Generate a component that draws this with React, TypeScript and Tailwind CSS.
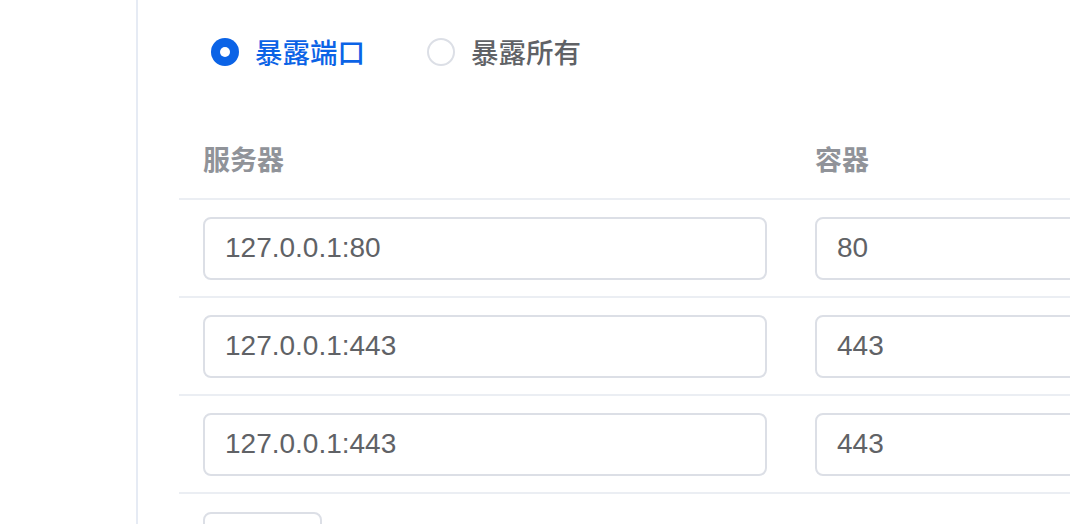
import React, { useState } from 'react';

const cjk = { fontFamily: '"Noto Sans CJK SC", "Noto Sans", sans-serif' };
const latin = { fontFamily: '"Liberation Sans", Arial, "Noto Sans CJK SC", sans-serif' };

const rows = [
  { host: '127.0.0.1:80', container: '80' },
  { host: '127.0.0.1:443', container: '443' },
  { host: '127.0.0.1:443', container: '443' },
];

function Radio({ checked, label, onClick }: { checked: boolean; label: string; onClick: () => void }) {
  return (
    <button onClick={onClick} className="flex items-center gap-4" style={cjk}>
      {checked ? (
        <span className="w-[28px] h-[28px] rounded-full bg-[#0b63e6] flex items-center justify-center">
          <span className="w-[10px] h-[10px] rounded-full bg-white" />
        </span>
      ) : (
        <span className="w-[28px] h-[28px] rounded-full border-2 border-[#dcdfe6] bg-white" />
      )}
      <span className={`text-[27.5px] leading-none font-medium ${checked ? 'text-[#0b63e6]' : 'text-[#606266]'}`}>{label}</span>
    </button>
  );
}

export default function App() {
  const [mode, setMode] = useState<'port' | 'all'>('port');

  return (
    <div className="w-[1070px] h-[524px] overflow-hidden bg-white flex">
      <div className="w-[136px] shrink-0" />
      <div className="w-[2px] shrink-0 bg-[#e6ebf4]" />
      <div className="flex-1 pl-[41px] min-w-0">
        <div className="h-[104px] flex items-center pl-[32px] gap-[62px]">
          <Radio checked={mode === 'port'} label="暴露端口" onClick={() => setMode('port')} />
          <Radio checked={mode === 'all'} label="暴露所有" onClick={() => setMode('all')} />
        </div>

        <div className="w-[1000px]">
          <div className="h-[96px] pt-[16px] flex items-center border-b-2 border-[#ebeef3]" style={cjk}>
            <div className="w-[612px] px-6 text-[27px] font-semibold text-[#909399]">服务器</div>
            <div className="px-6 text-[27px] font-semibold text-[#909399]">容器</div>
          </div>

          {rows.map((r, i) => (
            <div key={i} className="h-[98px] flex items-center border-b-2 border-[#ebeef3]">
              <div className="w-[612px] px-6">
                <div className="h-[63px] rounded-lg border-2 border-[#dcdfe6] flex items-center px-5 text-[28px] text-[#606266]" style={latin}>
                  {r.host}
                </div>
              </div>
              <div className="flex-1 px-6">
                <div className="h-[63px] rounded-lg border-2 border-[#dcdfe6] flex items-center px-5 text-[28px] text-[#606266]" style={latin}>
                  {r.container}
                </div>
              </div>
            </div>
          ))}

          <div className="pt-[18px] px-6">
            <div className="w-[119px] h-[63px] rounded-lg border-2 border-[#dcdfe6]" />
          </div>
        </div>
      </div>
    </div>
  );
}
